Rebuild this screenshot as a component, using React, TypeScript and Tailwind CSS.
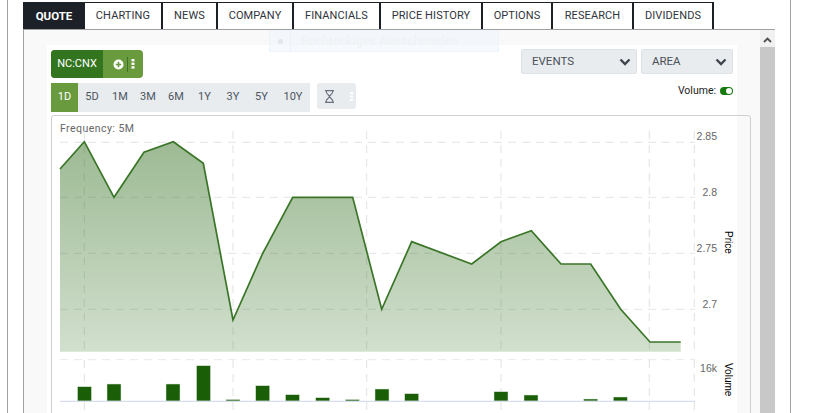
const tabs = [
  { label: 'QUOTE', width: 'w-[62px]', active: true },
  { label: 'CHARTING', width: 'w-[78px]' },
  { label: 'NEWS', width: 'w-[55px]' },
  { label: 'COMPANY', width: 'w-[76px]' },
  { label: 'FINANCIALS', width: 'w-[87px]' },
  { label: 'PRICE HISTORY', width: 'w-[102px]' },
  { label: 'OPTIONS', width: 'w-[70px]' },
  { label: 'RESEARCH', width: 'w-[81px]' },
  { label: 'DIVIDENDS', width: 'w-[80px]' },
];

const periods = [
  { label: '1D', width: 'w-[27px]', active: true },
  { label: '5D', width: 'w-[28px]' },
  { label: '1M', width: 'w-[28px]' },
  { label: '3M', width: 'w-[28px]' },
  { label: '6M', width: 'w-[28px]' },
  { label: '1Y', width: 'w-[29px]' },
  { label: '3Y', width: 'w-[28px]' },
  { label: '5Y', width: 'w-[29px]' },
  { label: '10Y', width: 'w-[34px]' },
];

const points =
  '60,169 84.3,141.7 114,197.3 144,152.3 173.3,141.7 203.3,163.3 233,320 262.7,253.3 292.7,197.3 352.7,197.3 381.7,309.3 411.7,241.7 471.7,264 501,241.7 531.3,230.7 561,264 590.7,264 620.7,309.3 650,342 680.7,342';

const bars = [
  [77.5, 386.7], [107, 384], [166, 384], [196.5, 365.7], [226, 399.5], [255.7, 385.7], [285.5, 394.7],
  [315.7, 397.7], [345.3, 399.5], [375, 389], [404.7, 393.7], [494, 391.7], [524, 395], [583.7, 399], [613.3, 397],
];

const gridY = [142.3, 197.3, 253.3, 309.3];
const gridX = [84.3, 233, 366.7, 501, 649.3, 694.3];
const yLabels = [
  { label: '2.85', y: 140 },
  { label: '2.8', y: 195.5 },
  { label: '2.75', y: 251.5 },
  { label: '2.7', y: 307.5 },
];

function Chevron() {
  return (
    <svg width="12" height="8" viewBox="0 0 12 8" fill="none" stroke="#3f4650" strokeWidth="2.4">
      <path d="M1.5 1.5 6 6l4.5-4.5" />
    </svg>
  );
}

function Dropdown({ label, width }: { label: string; width: string }) {
  return (
    <div className={`flex h-[25px] items-center justify-between rounded-[2px] border border-[#dfe3e7] bg-[#e9ecef] pl-[10px] pr-[4px] text-[11.5px] text-[#4a5058] ${width}`}>
      <span>{label}</span>
      <span className="mr-[1px] mt-[1px]"><Chevron /></span>
    </div>
  );
}

function PriceChart() {
  return (
    <svg width="698" height="297" viewBox="52 116 698 297" className="block">
      <defs>
        <linearGradient id="area" x1="0" y1="141" x2="0" y2="352" gradientUnits="userSpaceOnUse">
          <stop offset="0" stopColor="#3a7528" stopOpacity="0.5" />
          <stop offset="1" stopColor="#3a7528" stopOpacity="0.23" />
        </linearGradient>
      </defs>
      <text x="60" y="132" fontSize="10.5" letterSpacing="0.45" fill="#666" fontFamily="Roboto, sans-serif">Frequency: 5M</text>
      {gridY.map((y) => (
        <line key={y} x1="60" x2="695" y1={y} y2={y} stroke="#e4e4e6" strokeDasharray="8 6" />
      ))}
      <line x1="60" x2="695" y1="359.7" y2="359.7" stroke="#e8e8ea" strokeDasharray="8 6" />
      {gridX.map((x) => (
        <g key={x}>
          <line x1={x} x2={x} y1="131" y2="352" stroke="#e2e2e4" strokeDasharray="8 6" />
          <line x1={x} x2={x} y1="360" y2="413" stroke="#e2e2e4" strokeDasharray="8 6" />
        </g>
      ))}
      <polygon points={`60,351.7 ${points} 680.7,351.7`} fill="url(#area)" />
      <polyline points={points} fill="none" stroke="#3a7528" strokeWidth="1.7" />
      {bars.map(([x, y]) => (
        <rect key={x} x={x} y={y} width="14" height={401 - y} fill="#1a5e08" stroke="#dfe8dc" strokeWidth="0.5" />
      ))}
      <line x1="60" x2="695" y1="401.3" y2="401.3" stroke="#ccd6eb" />
      {yLabels.map((l) => (
        <text key={l.label} x="717" y={l.y} textAnchor="end" fontSize="10.5" fill="#666" fontFamily="'Liberation Sans', sans-serif">{l.label}</text>
      ))}
      <text x="717" y="372" textAnchor="end" fontSize="10.5" fill="#666" fontFamily="'Liberation Sans', sans-serif">16k</text>
      <text transform="translate(725 231) rotate(90)" fontSize="10" fill="#000" fontFamily="'Liberation Sans', sans-serif">Price</text>
      <text transform="translate(725 363) rotate(90)" fontSize="10" fill="#000" fontFamily="'Liberation Sans', sans-serif">Volume</text>
    </svg>
  );
}

export default function App() {
  return (
    <div className="h-[413px] w-[813px] overflow-hidden bg-white font-['Roboto',sans-serif]">
      <div className="ml-[7px] h-[413px] w-[784px] border-x border-[#a0a0a0] pl-[15px] pt-[2px]">
        <div className="flex h-[27px]">
          {tabs.map((tab) => (
            <div
              key={tab.label}
              className={
                tab.active
                  ? `flex items-center justify-center border-t-2 border-[#1c2128] bg-[#1c2128] text-[11.5px] font-bold text-white ${tab.width}`
                  : `flex items-center justify-center border-r-2 border-t border-[#1c2128] text-[11px] tracking-[0.1px] text-[#2f343a] ${tab.width}`
              }
            >
              {tab.label}
            </div>
          ))}
        </div>

        <div className="relative flex h-[384px] w-[752px] border-l border-t border-[#a0a0a0] bg-[#f9f9f9]">
          <div className="absolute left-[245px] top-0 z-10 flex h-[22px] w-[230px] items-center border border-[#eaf2fb]/70 bg-[#eef5fd]/50 text-[12px] text-[#f0f1f3]">
            <span className="flex h-full w-[21px] items-center justify-center border-r border-[#eaf1f9]">
              <span className="h-[5px] w-[5px] rounded-full bg-[#e2e5e9]" />
            </span>
            <span className="pl-[10px] tracking-[0.3px]">Rechteckiges Ausschneiden</span>
          </div>

          <div className="relative ml-[23px] mt-[15px] h-[400px] w-[690px] bg-white pl-[4px] pt-[5px]">
            <div className="flex justify-between pr-[4px]">
              <div className="flex flex-col gap-[5px]">
                <div className="flex h-[28px] w-[92px] overflow-hidden rounded-[4px] bg-[#6a9a3e] text-white">
                  <div className="flex w-[52px] items-center justify-center bg-[#33751f] text-[11px]">NC:CNX</div>
                  <div className="flex flex-1 items-center pl-[10px]">
                    <svg width="11" height="11" viewBox="0 0 11 11">
                      <circle cx="5.5" cy="5.5" r="5" fill="#fff" />
                      <path d="M5.5 2.8v5.4M2.8 5.5h5.400" stroke="#6a9a3e" strokeWidth="1.6" />
                    </svg>
                    <span className="ml-[3px] h-[15px] w-px bg-[#3f7426]" />
                    <svg width="4" height="10" viewBox="0 0 4 10" className="ml-[3px]" fill="#fff">
                      <rect x="0.5" y="0" width="3" height="2.4" />
                      <rect x="0.5" y="3.6" width="3" height="2.4" />
                      <rect x="0.5" y="7.2" width="3" height="2.4" />
                    </svg>
                  </div>
                </div>

                <div className="flex items-start gap-[7px]">
                  <div className="flex h-[29px] bg-[#e9ecef]">
                    {periods.map((p) => (
                      <div
                        key={p.label}
                        className={
                          p.active
                            ? `flex items-center justify-center bg-[#6a9a3e] text-[11px] text-white ${p.width}`
                            : `flex items-center justify-center text-[11px] text-[#4b5560] ${p.width}`
                        }
                      >
                        {p.label}
                      </div>
                    ))}
                  </div>
                  <div className="flex h-[26px] w-[39px] items-center rounded-[3px] bg-[#e9ecef] pl-[7px]">
                    <svg width="11" height="13" viewBox="0 0 11 13" fill="none" stroke="#6b7280" strokeWidth="1.2">
                      <path d="M1 .6h9M1 12.400h9M2 .6c0 4 3.500 4.400 3.500 5.900S2 8.500 2 12.400M9 .6c0 4-3.500 4.400-3.500 5.900S9 8.500 9 12.400" />
                    </svg>
                    <svg width="3" height="9" viewBox="0 0 3 9" className="ml-[15px]" fill="#fff">
                      <rect width="3" height="2" />
                      <rect y="3.500" width="3" height="2" />
                      <rect y="7" width="3" height="2" />
                    </svg>
                  </div>
                </div>
              </div>

              <div className="-mt-[1px] flex flex-col items-end">
                <div className="flex gap-[4px]">
                  <Dropdown label="EVENTS" width="w-[116px]" />
                  <Dropdown label="AREA" width="w-[92px]" />
                </div>
                <div className="mt-[12px] flex items-center gap-[4px] text-[10.5px] leading-none text-[#222]">
                  Volume:
                  <span className="flex h-[8px] w-[13px] items-center justify-end rounded-full bg-[#157a0b] pr-[1px]">
                    <span className="h-[6px] w-[6px] rounded-full bg-white" />
                  </span>
                </div>
              </div>
            </div>

            <div className="mt-[3px] w-[700px] rounded-t-[3px] border border-[#cfcfcf]">
              <PriceChart />
            </div>
          </div>

          <div className="absolute right-0 top-0 flex h-full w-[15px] flex-col items-center bg-[#f1f1f1]">
            <svg width="9" height="6" viewBox="0 0 9 6" className="mt-[7px]" fill="none" stroke="#505050" strokeWidth="1.8">
              <path d="M1 5 4.500 1.500 8 5" />
            </svg>
            <div className="mt-[4px] w-full flex-1 bg-[#c8c8c8]" />
          </div>
        </div>
      </div>
    </div>
  );
}
